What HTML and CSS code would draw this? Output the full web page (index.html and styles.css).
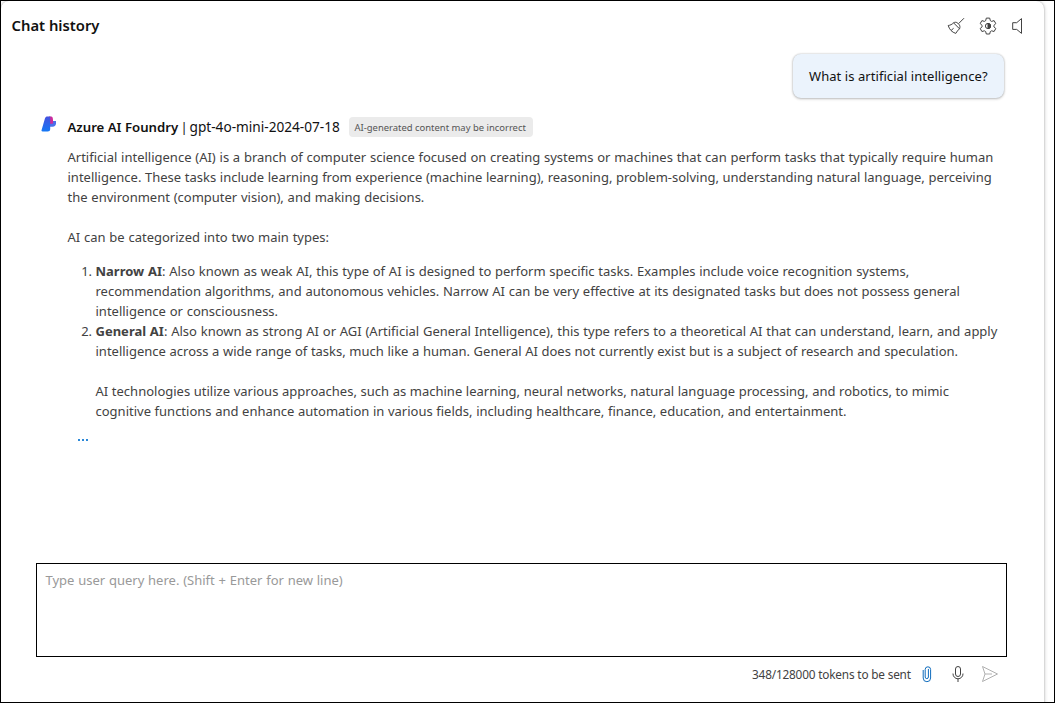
FILE: index.html
```html
<!DOCTYPE html>
<html lang="en">
<head>
<meta charset="utf-8">
<title>Chat history</title>
<link rel="stylesheet" href="styles.css">
</head>
<body>
<div class="window">
<main class="panel">
  <header class="header">
    <h1 class="title">Chat history</h1>
    <div class="tools">
      <svg class="icon" viewBox="0 0 20 20"><path d="M18 2.200 12.600 7.600M7.500 6.800l6 6M7.500 6.800c1.500-.8 3-.8 4.300.4l1 1c1.300 1.300 1.400 3 .7 4.600M7.500 6.800C6 8.500 4.300 9.200 2.200 9.500c1.200 4 3.800 6.800 7.600 7.900 1-1.700 2-3.200 3.700-4.600M5.200 14.300l2.400-2"/></svg>
      <svg class="icon" viewBox="0 0 20 20"><path d="M8.300 2.100h3.400l.6 2.500 1.300.8 2.500-.8 1.700 3-1.900 1.800v1.400l1.900 1.700-1.700 3-2.500-.7-1.300.8-.6 2.400H8.300l-.6-2.400-1.300-.8-2.500.7-1.700-3 1.900-1.700V9.400L2.200 7.600l1.700-3 2.500.8 1.300-.8z"/><circle cx="10" cy="10" r="2.600"/><path class="solid" d="M10 7.400a2.600 2.600 0 0 1 0 5.200z"/></svg>
      <svg class="icon" viewBox="0 0 20 20"><path d="M11.500 2.600v14.800L6.700 13.400H2.700V6.700h4z"/></svg>
    </div>
  </header>
  <section class="conversation">
    <div class="question"><span>What is artificial intelligence?</span></div>
    <article class="answer">
      <svg class="logo" viewBox="0 0 16 16"><defs><linearGradient id="blue" x1="0" y1="0" x2="0" y2="1"><stop offset="0" stop-color="#4650df"/><stop offset="1" stop-color="#1478f5"/></linearGradient></defs><path fill="#4a70ec" d="M8.500 5H15v2.500c0 2-1.300 3.200-3.500 3.200H8.500z"/><path fill="#ce2b9b" d="M8 .5h2.200c1.200 0 1.600 1 1.700 2.500l.3 4.500L9 8z"/><path fill="url(#blue)" d="M6.300.5H9.500C9 1.200 9.200 2 9.200 3v10c0 1.700-.9 2.500-2.500 2.500H1.600c-1 0-1.300-.5-1-1.400L4 2.200C4.500 1 5.300.5 6.300.5z"/></svg>
      <div class="body">
        <div class="byline"><strong class="product">Azure AI Foundry</strong><span class="divider">|</span><span class="model">gpt-4o-mini-2024-07-18</span><span class="badge">AI-generated content may be incorrect</span></div>
        <p class="para"><span class="line">Artificial intelligence (AI) is a branch of computer science focused on creating systems or machines that can perform tasks that typically require human</span><span class="line snug">intelligence. These tasks include learning from experience (machine learning), reasoning, problem-solving, understanding natural language, perceiving</span><span class="line">the environment (computer vision), and making decisions.</span></p>
        <p class="para intro"><span class="line">AI can be categorized into two main types:</span></p>
        <ol class="types">
          <li><span class="line"><b>Narrow AI</b>: Also known as weak AI, this type of AI is designed to perform specific tasks. Examples include voice recognition systems,</span><span class="line">recommendation algorithms, and autonomous vehicles. Narrow AI can be very effective at its designated tasks but does not possess general</span><span class="line">intelligence or consciousness.</span></li>
          <li><span class="line"><b>General AI</b>: Also known as strong AI or AGI (Artificial General Intelligence), this type refers to a theoretical AI that can understand, learn, and apply</span><span class="line snug">intelligence across a wide range of tasks, much like a human. General AI does not currently exist but is a subject of research and speculation.</span>
          <p class="closing"><span class="line snug">AI technologies utilize various approaches, such as machine learning, neural networks, natural language processing, and robotics, to mimic</span><span class="line snug">cognitive functions and enhance automation in various fields, including healthcare, finance, education, and entertainment.</span></p></li>
        </ol>
        <div class="more"><i></i><i></i><i></i></div>
      </div>
    </article>
  </section>
  <footer class="composer">
    <div class="input"><span>Type user query here. (Shift + Enter for new line)</span></div>
    <div class="actions">
      <span class="tokens">348/128000 tokens to be sent</span>
      <svg class="clip" viewBox="0 0 10 18"><path d="M3.200 4.500V12a1.600 1.600 0 0 0 3.200 0V4M1.200 5v8a3.600 3.600 0 0 0 7.400 0V4.500a2.700 2.700 0 0 0-5.400 0"/></svg>
      <svg class="mic" viewBox="0 0 12 18"><rect x="3.500" y="1.500" width="5" height="10" rx="2.500"/><path d="M1 8.500v.3a5 5 0 0 0 10 0v-.3M6 14v3"/></svg>
      <svg class="send" viewBox="0 0 18 18"><path d="M1.500 1.500 16.500 9l-15 7.500L4 9zM4 9h7"/></svg>
    </div>
  </footer>
</main>
</div>
</body>
</html>
```
FILE: styles.css
```css
* { box-sizing: border-box; }
body { margin: 0; background: #fff; color: #424242; font: 13px/20px "Noto Sans", "Open Sans", sans-serif; }
.window { width: 1055px; height: 703px; border: 1px solid #000; overflow: hidden; }
.panel { display: flex; flex-direction: column; width: 1043px; height: 712px; border-radius: 8px; box-shadow: 0 0 2px rgba(0,0,0,.25), 0 1px 4px rgba(0,0,0,.22); }
.header { display: flex; justify-content: space-between; height: 53px; padding: 13px 14px 0 10.5px; }
.title { margin: 0; font-size: 14.8px; line-height: 22px; font-weight: 600; color: #111; }
.tools { display: flex; gap: 12px; }
svg { display: block; fill: none; stroke: #424242; flex: none; }
.icon { width: 20px; height: 20px; margin-top: 2px; }
.solid { fill: #424242; }
.conversation { height: 509px; padding: 0 40px 0 40px; }
.question { display: flex; align-items: center; width: 211px; height: 44px; margin-left: auto; padding-left: 16px; border-radius: 8px; background: #ebf3fc; box-shadow: 0 0 2px rgba(0,0,0,.24), 0 1px 3px rgba(0,0,0,.22); color: #111; letter-spacing: .06px; }
.answer { display: flex; margin-top: 19px; }
.logo { width: 16px; height: 16px; stroke: none; margin: -1px 10.5px 0 0; }
.byline { display: flex; align-items: center; height: 20px; color: #111; white-space: pre; }
.product { font-weight: 600; width: 113px; font-size: 13.2px; }
.divider { width: 9px; }
.model { width: 152px; font-size: 13.65px; }
.badge { margin-left: 7px; width: 184px; height: 20px; padding-left: 6px; border-radius: 4px; background: #ebebeb; color: #555; font-size: 9.45px; line-height: 21px; }
.para { margin: 10px 0 0; }
.intro { margin-top: 20px; }
.line { display: block; white-space: nowrap; width: max-content; word-spacing: .39px; }
.snug { word-spacing: .24px; }
.types { margin: 14px 0 0; padding-left: 28px; }
.closing { margin: 20px 0 0; }
.more { display: flex; gap: 2px; margin: 18px 0 0 10px; }
.more i { width: 2px; height: 2px; background: #2b88d8; }
.composer { padding-left: 35px; }
.input { width: 971px; height: 94px; border: 1px solid #000; padding: 6px 8px 6px 8.5px; color: #999; word-spacing: .4px; }
.actions { display: flex; align-items: center; height: 34px; font-size: 11.8px; letter-spacing: -.18px; padding-left: 716px; white-space: nowrap; }
.tokens { width: 159px; margin-right: 11px; }
.clip { width: 10px; height: 18px; stroke: #0f6cbd; margin-right: 20px; }
.mic { width: 12px; height: 18px; margin-right: 17px; }
.send { width: 18px; height: 18px; stroke: #b0b0b0; }
```
